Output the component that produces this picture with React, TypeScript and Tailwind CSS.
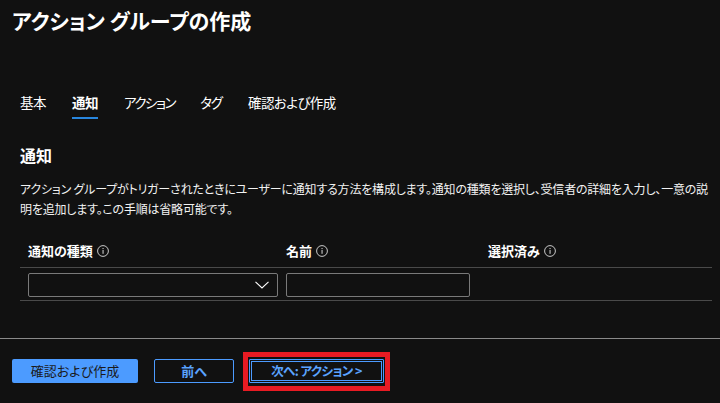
import React from "react";

const Info = () => (
  <svg width="12" height="12" viewBox="0 0 12 12" className="shrink-0">
    <circle cx="6" cy="6" r="5.4" fill="none" stroke="#c8c8c8" strokeWidth="1" />
    <rect x="5.5" y="5" width="1.1" height="3.8" fill="#c8c8c8" />
    <rect x="5.5" y="3" width="1.1" height="1.1" fill="#c8c8c8" />
  </svg>
);

const tabs = [
  { label: "基本", cls: "tracking-[-0.5px] border-transparent" },
  { label: "通知", cls: "ml-[26px] tracking-[-0.5px] font-semibold border-[#2886de]" },
  { label: "アクション", cls: "ml-[26px] tracking-[-1.5px] border-transparent" },
  { label: "タグ", cls: "ml-[25px] tracking-[-1px] border-transparent" },
  { label: "確認および作成", cls: "ml-[26px] tracking-[-0.6px] border-transparent" },
];

export default function App() {
  return (
    <div
      className="w-[720px] h-[403px] bg-[#111111] text-white flex flex-col overflow-hidden [font-feature-settings:'palt']"
      style={{ fontFamily: '"Noto Sans CJK JP", "Noto Sans", sans-serif' }}
    >
      <div className="flex-1 flex flex-col">
        <h1 className="pl-[12px] pt-[5px] text-[21px] leading-[30px] font-bold">
          アクション グループの作成
        </h1>

        <div className="mt-[57px] pl-[20px] flex text-[13.5px] leading-[20px]">
          {tabs.map((t) => (
            <div key={t.label} className={"pb-[5px] border-b-2 " + t.cls}>
              {t.label}
            </div>
          ))}
        </div>

        <div className="pl-[20px] pr-[8px]">
          <h2 className="mt-[25px] text-[16px] leading-[22px] font-bold">通知</h2>
          <p className="mt-[13px] text-[12px] leading-[20px] tracking-[-0.2px] text-[#f2f2f2]">
            <span className="block whitespace-nowrap">
              アクション グループがトリガーされたときにユーザーに通知する方法を構成します。通知の種類を選択し、受信者の詳細を入力し、一意の説
            </span>
            <span className="block whitespace-nowrap">明を追加します。この手順は省略可能です。</span>
          </p>

          <div className="mt-[22px] grid grid-cols-[250px_194px_1fr] gap-x-[8px] pl-[8px] pb-[6px] border-b border-[#4a4a4a] text-[13px] leading-[20px] font-bold">
            <div className="flex items-center gap-[4px]">
              <span>通知の種類</span>
              <Info />
            </div>
            <div className="flex items-center gap-[4px]">
              <span>名前</span>
              <Info />
            </div>
            <div className="flex items-center gap-[4px]">
              <span>選択済み</span>
              <Info />
            </div>
          </div>

          <div className="grid grid-cols-[250px_194px_1fr] gap-x-[8px] pl-[8px] pt-[5px] pb-[3px] border-b border-[#4a4a4a]">
            <div className="h-[24px] border border-[#7a7a7a] rounded-[2px] flex items-center justify-end pr-[8px]">
              <svg width="14" height="8" viewBox="0 0 14 8">
                <polyline points="0.5,0.8 7,7 13.5,0.8" fill="none" stroke="#ffffff" strokeWidth="1.1" />
              </svg>
            </div>
            <div className="w-[184px] h-[24px] border border-[#7a7a7a] rounded-[2px]" />
            <div />
          </div>
        </div>
      </div>

      <div className="h-[65px] border-t border-[#8a8a8a] flex items-start pl-[12px] pt-[20px] text-[13px]">
        <button className="w-[126px] h-[24px] rounded-[2px] bg-[#4c9bff] text-[#1a1a1a] leading-[24px]">
          確認および作成
        </button>
        <button className="ml-[16px] w-[80px] h-[24px] rounded-[2px] border border-[#4c9bff] text-[#5aa3ff] font-semibold leading-[22px]">
          前へ
        </button>
        <div className="ml-[9px] -mt-[7px] border-[5px] border-[#e81b23] pt-[2px] pb-[3px] px-[1px]">
          <button className="w-[135px] h-[24px] rounded-[1px] border border-[#4c9bff] outline outline-1 outline-[#4c9bff] outline-offset-[-3px] text-[#5aa3ff] text-[12.5px] tracking-[-0.6px] font-semibold leading-[22px]">
            次へ: アクション &gt;
          </button>
        </div>
      </div>
    </div>
  );
}
